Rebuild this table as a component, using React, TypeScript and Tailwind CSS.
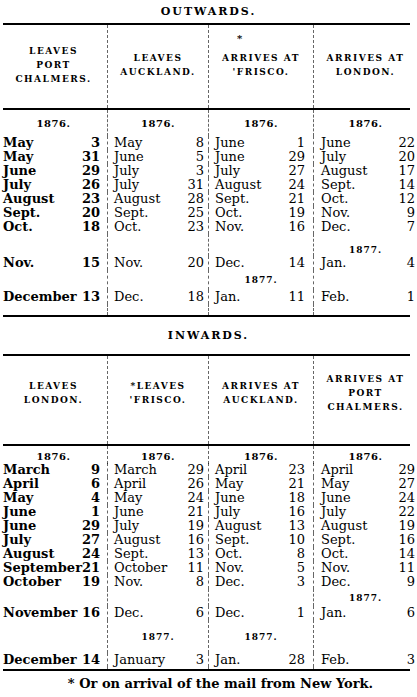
import React from "react";

type Entry = [string, string] | null;
type Row =
  | { kind: "entry"; cells: Entry[] }
  | { kind: "gap"; h: string; labels: (string | null)[]; align?: string };

const COLS = "grid grid-cols-[107px_101px_105px_104px]";
const PAD = ["pl-[3px] pr-[7px]", "pl-[6px] pr-[4px]", "pl-[6px] pr-[8px]", "pl-[7px] pr-[2px]"];
const DIV = "border-l border-dashed border-black/60";

const OUT_HEAD: string[][] = [
  ["LEAVES", "PORT", "CHALMERS."],
  ["LEAVES", "AUCKLAND."],
  ["ARRIVES AT", "'FRISCO."],
  ["ARRIVES AT", "LONDON."],
];

const IN_HEAD: string[][] = [
  ["LEAVES", "LONDON."],
  ["*LEAVES", "'FRISCO."],
  ["ARRIVES AT", "AUCKLAND."],
  ["ARRIVES AT", "PORT", "CHALMERS."],
];

const OUT_ROWS: Row[] = [
  { kind: "entry", cells: [["May", "3"], ["May", "8"], ["June", "1"], ["June", "22"]] },
  { kind: "entry", cells: [["May", "31"], ["June", "5"], ["June", "29"], ["July", "20"]] },
  { kind: "entry", cells: [["June", "29"], ["July", "3"], ["July", "27"], ["August", "17"]] },
  { kind: "entry", cells: [["July", "26"], ["July", "31"], ["August", "24"], ["Sept.", "14"]] },
  { kind: "entry", cells: [["August", "23"], ["August", "28"], ["Sept.", "21"], ["Oct.", "12"]] },
  { kind: "entry", cells: [["Sept.", "20"], ["Sept.", "25"], ["Oct.", "19"], ["Nov.", "9"]] },
  { kind: "entry", cells: [["Oct.", "18"], ["Oct.", "23"], ["Nov.", "16"], ["Dec.", "7"]] },
  { kind: "gap", h: "h-[22px]", labels: [null, null, null, "1877."], align: "items-end" },
  { kind: "entry", cells: [["Nov.", "15"], ["Nov.", "20"], ["Dec.", "14"], ["Jan.", "4"]] },
  { kind: "gap", h: "h-[20px]", labels: [null, null, "1877.", null] },
  { kind: "entry", cells: [["December", "13"], ["Dec.", "18"], ["Jan.", "11"], ["Feb.", "1"]] },
  { kind: "gap", h: "h-[11px]", labels: [null, null, null, null] },
];

const IN_ROWS: Row[] = [
  { kind: "entry", cells: [["March", "9"], ["March", "29"], ["April", "23"], ["April", "29"]] },
  { kind: "entry", cells: [["April", "6"], ["April", "26"], ["May", "21"], ["May", "27"]] },
  { kind: "entry", cells: [["May", "4"], ["May", "24"], ["June", "18"], ["June", "24"]] },
  { kind: "entry", cells: [["June", "1"], ["June", "21"], ["July", "16"], ["July", "22"]] },
  { kind: "entry", cells: [["June", "29"], ["July", "19"], ["August", "13"], ["August", "19"]] },
  { kind: "entry", cells: [["July", "27"], ["August", "16"], ["Sept.", "10"], ["Sept.", "16"]] },
  { kind: "entry", cells: [["August", "24"], ["Sept.", "13"], ["Oct.", "8"], ["Oct.", "14"]] },
  { kind: "entry", cells: [["September", "21"], ["October", "11"], ["Nov.", "5"], ["Nov.", "11"]] },
  { kind: "entry", cells: [["October", "19"], ["Nov.", "8"], ["Dec.", "3"], ["Dec.", "9"]] },
  { kind: "gap", h: "h-[17px]", labels: [null, null, null, "1877."] },
  { kind: "entry", cells: [["November", "16"], ["Dec.", "6"], ["Dec.", "1"], ["Jan.", "6"]] },
  { kind: "gap", h: "h-[33px]", labels: [null, "1877.", "1877.", null] },
  { kind: "entry", cells: [["December", "14"], ["January", "3"], ["Jan.", "28"], ["Feb.", "3"]] },
  { kind: "gap", h: "h-[2px]", labels: [null, null, null, null] },
];

function Rule() {
  return <div className="ml-[3px] mr-[7px] h-[2px] bg-black" />;
}

function Title({ text, h }: { text: string; h: string }) {
  return (
    <div className={`${h} flex items-center justify-center`}>
      <span className="text-[11px] font-bold tracking-[0.18em] leading-[14px]">{text}</span>
    </div>
  );
}

function Header({ cols, h, pb, star }: { cols: string[][]; h: string; pb: string; star?: boolean }) {
  return (
    <div className={`${COLS} ${h}`}>
      {cols.map((lines, i) => (
        <div
          key={i}
          className={`relative flex flex-col items-center justify-center ${pb} ${i > 0 ? DIV : ""}`}
        >
          {star && i === 2 ? (
            <span className="absolute left-[28px] top-[6px] text-[10px] font-bold">*</span>
          ) : null}
          {lines.map((l, j) => (
            <span key={j} className="text-[9px] font-bold tracking-[1.5px] leading-[14px] whitespace-nowrap">
              {l}
            </span>
          ))}
        </div>
      ))}
    </div>
  );
}

function Year({ h, pt }: { h: string; pt: string }) {
  return (
    <div className={`${COLS} ${h}`}>
      {[0, 1, 2, 3].map((i) => (
        <div key={i} className={`flex justify-center ${pt} ${i > 0 ? DIV : ""}`}>
          <span className="text-[10px] font-bold tracking-[0.5px] leading-[14px]">1876.</span>
        </div>
      ))}
    </div>
  );
}

function Rows({ rows }: { rows: Row[] }) {
  return (
    <div>
      {rows.map((r, ri) =>
        r.kind === "entry" ? (
          <div key={ri} className={`${COLS} h-[14px]`}>
            {r.cells.map((c, i) => (
              <div
                key={i}
                className={`flex items-center justify-between whitespace-nowrap text-[13px] leading-[14px] ${PAD[i]} ${
                  i === 0 ? "font-bold" : "font-normal"
                } ${i > 0 ? DIV : ""}`}
              >
                <span>{c ? c[0] : ""}</span>
                <span>{c ? c[1] : ""}</span>
              </div>
            ))}
          </div>
        ) : (
          <div key={ri} className={`${COLS} ${r.h}`}>
            {r.labels.map((l, i) => (
              <div
                key={i}
                className={`flex justify-center ${r.align ?? "items-center"} ${i > 0 ? DIV : ""}`}
              >
                {l ? (
                  <span className="text-[9px] font-bold tracking-[1px] leading-[12px]">{l}</span>
                ) : null}
              </div>
            ))}
          </div>
        )
      )}
    </div>
  );
}

export default function App() {
  return (
    <div className="w-[417px] h-[697px] overflow-hidden bg-white text-black font-['DejaVu_Serif','Liberation_Serif',serif]">
      <Title text="OUTWARDS." h="h-[23px]" />
      <Rule />
      <Header cols={OUT_HEAD} h="h-[83px]" pb="pb-[4px]" star />
      <Rule />
      <Year h="h-[26px]" pt="pt-[7px]" />
      <Rows rows={OUT_ROWS} />
      <Rule />
      <Title text="INWARDS." h="h-[37px]" />
      <Rule />
      <Header cols={IN_HEAD} h="h-[88px]" pb="pb-[14px]" />
      <Rule />
      <Year h="h-[17px]" pt="pt-[4px]" />
      <Rows rows={IN_ROWS} />
      <Rule />
      <div className="h-[26px] flex items-center justify-center pl-[24px]">
        <span className="text-[13px] leading-[14px] font-bold whitespace-nowrap">
          * Or on arrival of the mail from New York.
        </span>
      </div>
    </div>
  );
}
